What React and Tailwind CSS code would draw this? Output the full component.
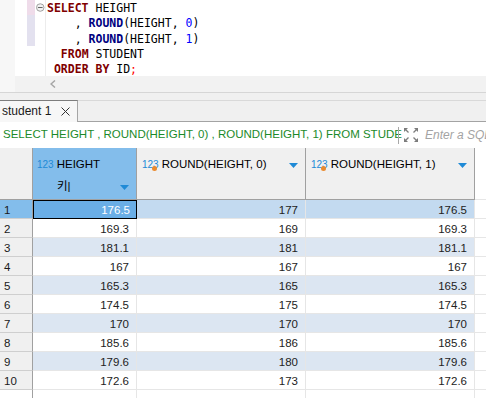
const rows = [
  ['176.5', '177', '176.5'],
  ['169.3', '169', '169.3'],
  ['181.1', '181', '181.1'],
  ['167', '167', '167'],
  ['165.3', '165', '165.3'],
  ['174.5', '175', '174.5'],
  ['170', '170', '170'],
  ['185.6', '186', '185.6'],
  ['179.6', '180', '179.6'],
  ['172.6', '173', '172.6'],
];

const kw = 'font-bold text-[#7f0000]';
const fn = 'font-bold text-[#00007f]';
const num = 'text-[#0000ff]';

function Triangle() {
  return (
    <svg width="9" height="5" viewBox="0 0 9 5" className="shrink-0">
      <polygon points="0,0 9,0 4.5,5" fill="#1f8ad6" />
    </svg>
  );
}

function TypeBadge({ dot }) {
  return (
    <span className="relative text-[10px] leading-[12px] text-[#1e8ad6]">
      123
      {dot && <span className="absolute left-[10px] top-[7px] h-[5px] w-[5px] rounded-full bg-[#ea8a2e]" />}
    </span>
  );
}

function Editor() {
  return (
    <div className="h-[93px] border-b border-[#d6d6d6] flex flex-col">
      <div className="flex h-[76px]">
        <div className="w-[15px] bg-[#f7f7f7]" />
        <div className="w-[30px] bg-white flex items-start pl-[12px]">
          <div className="w-[8px] flex flex-col">
            <div className="h-[15px] bg-[#efdcea]" />
            <div className="h-[31px] bg-[#e3e1ef]" />
          </div>
          <svg width="10" height="10" viewBox="0 0 10 10" className="ml-[1px] mt-[3px]">
            <circle cx="4.5" cy="4.5" r="4" fill="#f2f2f2" stroke="#9c9c9c" />
            <line x1="2" y1="4.5" x2="7" y2="4.5" stroke="#5a5a5a" />
          </svg>
        </div>
        <div className="flex-1 bg-white border-l border-[#ececec] pl-[1px] pt-[1px] font-['DejaVu_Sans_Mono',monospace] text-[11.5px] leading-[15.25px] text-black whitespace-pre">
          <div><span className={kw}>SELECT</span> HEIGHT</div>
          <div>    , <span className={fn}>ROUND</span>(HEIGHT, <span className={num}>0</span>)</div>
          <div>    , <span className={fn}>ROUND</span>(HEIGHT, <span className={num}>1</span>)</div>
          <div>  <span className={kw}>FROM</span> STUDENT</div>
          <div> <span className={kw}>ORDER BY</span> ID<span className="text-[#ff0000]">;</span></div>
        </div>
      </div>
      <div className="flex h-[16px]">
        <div className="w-[15px] bg-[#f7f7f7]" />
        <div className="w-[30px] bg-[#f2f2f2]" />
        <div className="flex-1 bg-[#f2f2f2] flex items-center pl-[5px]">
          <svg width="6" height="8" viewBox="0 0 6 8">
            <polyline points="5,0.5 1,4 5,7.5" fill="none" stroke="#a6a6a6" strokeWidth="1.5" />
          </svg>
        </div>
      </div>
    </div>
  );
}

function TabBar() {
  return (
    <div className="h-[29px] pt-[7px] flex">
      <div className="w-[78px] h-[22px] bg-[#f7f7f7] border-t border-r border-t-[#7d7d7d] border-r-[#a6a6a6] flex items-center pl-[2px] pb-[1px]">
        <span className="text-[12px] text-[#1a1a1a]">student 1</span>
        <svg width="9" height="9" viewBox="0 0 9 9" className="ml-[10px]">
          <line x1="0.5" y1="0.5" x2="8.5" y2="8.5" stroke="#333" />
          <line x1="8.5" y1="0.5" x2="0.5" y2="8.5" stroke="#333" />
        </svg>
      </div>
      <div className="flex-1 h-[22px] border-t border-b border-t-[#d9d9d9] border-b-[#a3a3a3]" />
    </div>
  );
}

function FilterBar() {
  return (
    <div className="h-[26px] bg-white flex items-center">
      <div className="w-[398px] pl-[3px] whitespace-nowrap text-[11.5px] text-[#1b8a2a]">
        SELECT HEIGHT , ROUND(HEIGHT, 0) , ROUND(HEIGHT, 1) FROM STUDE
      </div>
      <div className="w-px h-[17px] bg-[#a8a8a8]" />
      <svg width="16" height="16" viewBox="0 0 16 16" className="ml-[4px]" stroke="#7c7c7c" fill="#7c7c7c" strokeWidth="1.2">
        <line x1="1.5" y1="1.5" x2="5.5" y2="5.5" />
        <polygon points="1,1 5,1 1,5" stroke="none" />
        <line x1="14.5" y1="1.5" x2="10.5" y2="5.5" />
        <polygon points="15,1 11,1 15,5" stroke="none" />
        <line x1="1.5" y1="14.5" x2="5.5" y2="10.5" />
        <polygon points="1,15 5,15 1,11" stroke="none" />
        <line x1="14.5" y1="14.5" x2="10.5" y2="10.5" />
        <polygon points="15,15 11,15 15,11" stroke="none" />
      </svg>
      <div className="ml-[6px] flex-1 overflow-hidden whitespace-nowrap italic text-[12px] text-[#a3a3a3]">
        Enter a SQL
      </div>
    </div>
  );
}

function Header() {
  return (
    <div className="flex h-[52px]">
      <div className="w-[33px] bg-[#f0f0f0] border-r border-b border-[#a0a0a0]" />
      <div className="w-[104px] bg-[#83bdeb] border-r border-b border-[#a0a0a0] pt-[9px] pl-[4px]">
        <div className="flex items-center h-[16px] gap-[3px]">
          <TypeBadge />
          <span className="text-[11.5px] text-black">HEIGHT</span>
        </div>
        <div className="flex items-center justify-between h-[16px] mt-[6px] pl-[20px] pr-[7px]">
          <span className="text-[11.5px] text-black font-['Liberation_Sans','Noto_Sans_CJK_KR',sans-serif]">키|</span>
          <Triangle />
        </div>
      </div>
      {['ROUND(HEIGHT, 0)', 'ROUND(HEIGHT, 1)'].map((h) => (
        <div key={h} className="w-[169px] bg-[#f0f0f0] border-r border-b border-[#a0a0a0] pt-[9px] pl-[5px] pr-[7px]">
          <div className="flex items-center h-[16px]">
            <TypeBadge dot />
            <span className="ml-[3px] text-[11.5px] text-black">{h}</span>
            <span className="flex-1" />
            <Triangle />
          </div>
        </div>
      ))}
      <div className="flex-1 bg-white border-b border-[#e6e6e6]" />
    </div>
  );
}

function Row({ values, index }) {
  const selected = index === 0;
  const striped = index % 2 === 0 && index > 0;
  const rowBg = selected ? 'bg-[#c3daf0]' : striped ? 'bg-[#dce6f2]' : 'bg-white';
  return (
    <div className="flex h-[19px] text-[11.5px] leading-[16px]">
      <div className={`w-[33px] border-r border-r-[#a0a0a0] border-b border-b-[#cfcfcf] pl-[4px] pt-[2px] text-[#1a1a1a] ${selected ? 'bg-[#83bdeb]' : 'bg-[#f0f0f0]'}`}>
        {index + 1}
      </div>
      {selected ? (
        <div className="w-[104px] bg-[#6aaee6] border border-black text-right pr-[6px] pt-[1px] text-white">
          {values[0]}
        </div>
      ) : (
        <div className={`w-[104px] ${rowBg} border-r border-b border-[#e6e6e6] text-right pr-[7px] pt-[2px] text-[#222]`}>
          {values[0]}
        </div>
      )}
      <div className={`w-[169px] ${rowBg} border-r border-b border-[#e6e6e6] text-right pr-[7px] pt-[2px] text-[#222]`}>
        {values[1]}
      </div>
      <div className={`w-[169px] ${rowBg} border-r border-b border-[#e6e6e6] text-right pr-[7px] pt-[2px] text-[#222]`}>
        {values[2]}
      </div>
      <div className="flex-1 bg-white border-b border-[#e6e6e6]" />
    </div>
  );
}

export default function App() {
  return (
    <div className="w-[486px] h-[398px] overflow-hidden bg-[#f0f0f0] font-['Liberation_Sans',Arial,sans-serif]">
      <Editor />
      <TabBar />
      <FilterBar />
      <div className="bg-white">
        <Header />
        {rows.map((r, i) => (
          <Row key={i} values={r} index={i} />
        ))}
        <div className="flex h-[20px]">
          <div className="w-[33px] bg-white border-r border-[#a0a0a0]" />
          <div className="w-[104px] border-r border-[#e6e6e6]" />
          <div className="w-[169px] border-r border-[#e6e6e6]" />
          <div className="w-[169px] border-r border-[#e6e6e6]" />
        </div>
      </div>
    </div>
  );
}
